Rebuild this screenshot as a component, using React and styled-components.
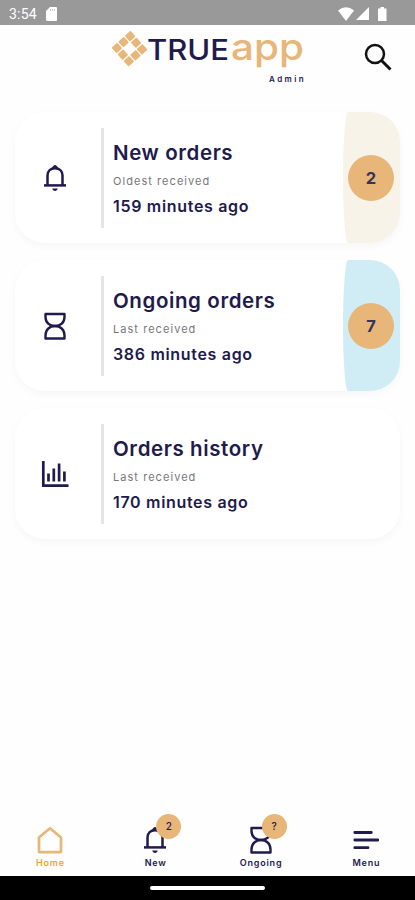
import React from 'react'
import styled, { createGlobalStyle } from 'styled-components'

const NAVY = '#211a4d'
const ORANGE = '#e7b678'

const GlobalStyle = createGlobalStyle`
    * {
        box-sizing: border-box;
    }
    body {
        margin: 0;
        background: #fefefe;
        font-family: Inter, "Liberation Sans", sans-serif;
        color: ${NAVY};
    }
`

const Screen = styled.div`
    width: 415px;
    height: 900px;
    display: flex;
    flex-direction: column;
    overflow: hidden;
`

const StatusBar = styled.div`
    height: 25px;
    flex: none;
    display: flex;
    align-items: center;
    justify-content: space-between;
    padding: 2px 28px 0 9px;
    background: #999;
    color: #fff;
`

const StatusGroup = styled.div`
    display: flex;
    align-items: center;
    gap: ${p => p.$gap}px;
`

const Clock = styled.span`
    font-family: Roboto, sans-serif;
    font-size: 14px;
    line-height: 16px;
    letter-spacing: 0.2px;
`

const Header = styled.header`
    height: 87px;
    flex: none;
    display: flex;
    justify-content: space-between;
    padding: 6px 23px 0 112px;
`

const Brand = styled.div`
    width: 192px;
`

const Logo = styled.svg`
    display: block;
    overflow: visible;
`

const Role = styled.div`
    font-size: 8px;
    line-height: 10px;
    font-weight: 600;
    letter-spacing: 2.4px;
    margin: 1px -2px 0 0;
    text-align: right;
    white-space: nowrap;
`

const SearchButton = styled.button`
    align-self: flex-start;
    margin-top: 12px;
    padding: 0;
    border: 0;
    background: none;
    line-height: 0;
    color: #111;
`

const Cards = styled.main`
    flex: 1;
    display: flex;
    flex-direction: column;
    gap: 17px;
    padding: 0 15px;
`

const Card = styled.section`
    height: 131px;
    display: flex;
    align-items: center;
    border-radius: 30px;
    background: #fff;
    box-shadow: 0 3px 8px rgba(0, 0, 0, 0.035);
`

const CardIcon = styled.div`
    width: 86px;
    display: flex;
    justify-content: center;
    padding-right: 7px;
`

const CardBody = styled.div`
    flex: 1;
    height: 100px;
    padding: 12px 0 0 9px;
    border-left: 3px solid #e5e5e5;
    white-space: nowrap;
`

const Title = styled.h2`
    margin: 0;
    font-size: 20.5px;
    line-height: 25px;
    font-weight: 600;
    letter-spacing: 0.6px;
`

const Caption = styled.div`
    margin-top: 9px;
    font-size: 11px;
    line-height: 14px;
    letter-spacing: 1.05px;
    color: #777;
`

const Elapsed = styled.div`
    margin-top: 8px;
    font-size: 16px;
    line-height: 20px;
    font-weight: 600;
    letter-spacing: 0.68px;
`

const CountPanel = styled.div`
    width: 57px;
    height: 131px;
    display: flex;
    align-items: center;
    justify-content: flex-end;
    padding-right: 6px;
    border-radius: 5px 30px 30px 5px / 50% 30px 30px 50%;
    background: ${p => p.$color};
`

const Count = styled.div`
    width: 46px;
    height: 46px;
    display: flex;
    align-items: center;
    justify-content: center;
    border-radius: 50%;
    background: ${ORANGE};
    color: #35345a;
    font-size: 16.5px;
    font-weight: 700;
`

const BottomNav = styled.nav`
    height: 64px;
    flex: none;
    display: flex;
    justify-content: space-between;
    padding: 14px 15px 0 16px;
`

const NavItem = styled.a`
    position: relative;
    width: 68px;
    display: flex;
    flex-direction: column;
    align-items: center;
    color: ${NAVY};
`

const NavIcon = styled.div`
    height: 28px;
    display: flex;
    align-items: center;
`

const NavLabel = styled.span`
    margin-top: 3px;
    font-size: 9px;
    line-height: 12px;
    font-weight: 600;
    letter-spacing: 0.8px;
    margin-right: -0.8px;
    color: ${p => (p.$active ? '#f5a52f' : NAVY)};
`

const NavBadge = styled.span`
    position: absolute;
    top: -12px;
    left: 35px;
    width: 25px;
    height: 25px;
    border-radius: 50%;
    background: ${ORANGE};
    font-size: 10px;
    line-height: 25px;
    font-weight: 500;
    text-align: center;
`

const SystemBar = styled.div`
    height: 24px;
    flex: none;
    display: flex;
    align-items: center;
    justify-content: center;
    background: #000;
`

const Handle = styled.div`
    width: 115px;
    height: 4px;
    border-radius: 2px;
    background: #fff;
`

const tiles = [[0, -12.6], [6.3, -6.3], [12.6, 0], [6.3, 6.3], [0, 12.6], [-6.3, 6.3], [-12.6, 0], [-6.3, -6.3]]

const BrandLogo = () => (
    <Logo width="192" height="42" viewBox="0 0 192 42">
        <g fill={ORANGE} transform="translate(17.5 17.7) rotate(3)">
            {tiles.map(([x, y]) => (
                <rect key={`${x},${y}`} x={x - 3.8} y={y - 3.8} width="7.6" height="7.6" rx="0.8" transform={`rotate(45 ${x} ${y})`} />
            ))}
        </g>
        <text x="35" y="29" fontSize="29" fontWeight="500" fill={NAVY} textLength="82" lengthAdjust="spacingAndGlyphs">TRUE</text>
        <text x="119" y="29" fontSize="37" fontWeight="500" fill={ORANGE} textLength="73" lengthAdjust="spacingAndGlyphs">app</text>
    </Logo>
)

const BellIcon = () => (
    <svg width="24" height="28" viewBox="0 0 24 28" fill="none" stroke="currentColor" strokeWidth="2.5">
        <path d="M4.5 21V11.5C4.5 7 7.8 4.2 12 4.2S19.5 7 19.5 11.5V21" />
        <path d="M1 21.4H23" />
        <path d="M9.5 4.6C9.5 .6 14.5 .6 14.5 4.6" fill="currentColor" strokeWidth="1" />
        <path d="M9.3 24.6H14.7C14.3 27.8 9.7 27.8 9.3 24.6Z" fill="currentColor" stroke="none" />
    </svg>
)

const HourglassIcon = () => (
    <svg width="22" height="28" viewBox="0 0 22 28" fill="none" stroke="currentColor" strokeWidth="2.4" strokeLinejoin="round">
        <path d="M1.5 2H20.5V5C20.5 10.5 16.5 14 11 14S1.5 10.5 1.5 5Z" />
        <path d="M1.5 26.5H20.5V23.5C20.5 18 16.5 14 11 14S1.5 18 1.5 23.5Z" />
    </svg>
)

const ChartIcon = () => (
    <svg width="28" height="28" viewBox="0 0 28 28" fill="none" stroke="currentColor" strokeWidth="2.7">
        <path d="M2.3 1V25.7H27.5" />
        <path d="M7.5 13.5V21.5M12.8 8.5V21.5M18.1 3.5V21.5M23.4 11.5V21.5" />
    </svg>
)

const HomeIcon = () => (
    <svg width="26" height="28" viewBox="0 0 26 28" fill="none" stroke={ORANGE} strokeWidth="2.7" strokeLinejoin="round">
        <path d="M2 11.5L13 2.2L24 11.5V25.5Q24 26.2 23.3 26.2H2.7Q2 26.2 2 25.5Z" />
    </svg>
)

const MenuIcon = () => (
    <svg width="26" height="28" viewBox="0 0 26 28" fill="none" stroke="currentColor" strokeWidth="2.8" strokeLinecap="round">
        <path d="M1.8 6.5H18.3M1.8 14H25M1.8 21.7H15" />
    </svg>
)

const orders = [
    { title: 'New orders', caption: 'Oldest received', elapsed: '159 minutes ago', icon: <BellIcon />, count: 2, color: '#f7f3e8' },
    { title: 'Ongoing orders', caption: 'Last received', elapsed: '386 minutes ago', icon: <HourglassIcon />, count: 7, color: '#d0edf6' },
    { title: 'Orders history', caption: 'Last received', elapsed: '170 minutes ago', icon: <ChartIcon /> },
]

const links = [
    { label: 'Home', icon: <HomeIcon />, active: true },
    { label: 'New', icon: <BellIcon />, badge: '2' },
    { label: 'Ongoing', icon: <HourglassIcon />, badge: '?' },
    { label: 'Menu', icon: <MenuIcon /> },
]

const App = () => {
    return (
        <Screen>
            <GlobalStyle />
            <StatusBar>
                <StatusGroup $gap={9}>
                    <Clock>3:54</Clock>
                    <svg width="11" height="14" viewBox="0 0 11 14">
                        <path d="M4 0H10Q11 0 11 1V13Q11 14 10 14H1Q0 14 0 13V4Z" fill="#fff" />
                        <path d="M4.5 2V4M6.5 2V4M8.5 2V4" stroke="#bbb" strokeWidth="0.8" />
                    </svg>
                </StatusGroup>
                <StatusGroup $gap={2}>
                    <svg width="16" height="14" viewBox="0 0 16 14" fill="#fff">
                        <path d="M0 3.5Q8 -3 16 3.5L8 14Z" />
                    </svg>
                    <svg width="13" height="13" viewBox="0 0 13 13" fill="#fff">
                        <path d="M13 0V13H0Z" />
                    </svg>
                    <svg width="16" height="14" viewBox="0 0 16 14" fill="#fff">
                        <path d="M7 1.5H9.5V0H13V1.5H15.5V14H7Z" />
                    </svg>
                </StatusGroup>
            </StatusBar>
            <Header>
                <Brand>
                    <BrandLogo />
                    <Role>Admin</Role>
                </Brand>
                <SearchButton aria-label="Search">
                    <svg width="28" height="28" viewBox="0 0 28 28" fill="none" stroke="currentColor" strokeWidth="2.5">
                        <circle cx="11" cy="11" r="9" />
                        <path d="M17.5 17.5L26.5 26.5" strokeWidth="3" />
                    </svg>
                </SearchButton>
            </Header>
            <Cards>
                {orders.map(order => (
                    <Card key={order.title}>
                        <CardIcon>{order.icon}</CardIcon>
                        <CardBody>
                            <Title>{order.title}</Title>
                            <Caption>{order.caption}</Caption>
                            <Elapsed>{order.elapsed}</Elapsed>
                        </CardBody>
                        {order.count && (
                            <CountPanel $color={order.color}>
                                <Count>{order.count}</Count>
                            </CountPanel>
                        )}
                    </Card>
                ))}
            </Cards>
            <BottomNav>
                {links.map(link => (
                    <NavItem key={link.label}>
                        <NavIcon>{link.icon}</NavIcon>
                        <NavLabel $active={link.active}>{link.label}</NavLabel>
                        {link.badge && <NavBadge>{link.badge}</NavBadge>}
                    </NavItem>
                ))}
            </BottomNav>
            <SystemBar>
                <Handle />
            </SystemBar>
        </Screen>
    )
}

export default App
